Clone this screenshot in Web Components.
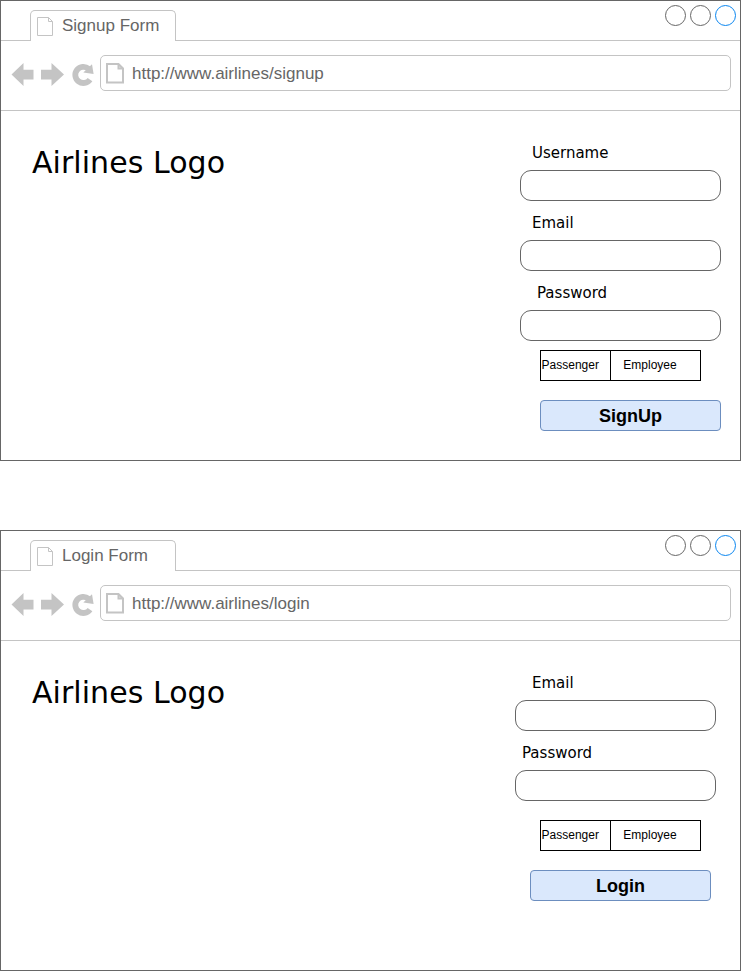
<!DOCTYPE html>
<html lang="en">
<head>
<meta charset="utf-8">
<title>Airlines forms</title>
<style>
html,body{margin:0;background:#fff}
body{width:741px;height:971px;overflow:hidden;display:flex;flex-direction:column;justify-content:space-between;font-family:"Liberation Sans",Arial,sans-serif;color:#000}
</style>
</head>
<body>
<browser-window heading="Signup Form" url="http://www.airlines/signup" style="height:461px">
  <site-logo>Airlines Logo</site-logo>
  <account-form slot="form">
    <form-field style="--indent:12px">Username</form-field>
    <form-field style="--indent:12px">Email</form-field>
    <form-field style="--indent:17px">Password</form-field>
    <role-picker style="margin:9px 0 0 20px"></role-picker>
    <submit-button style="margin:19px 0 0 20px">SignUp</submit-button>
  </account-form>
</browser-window>
<browser-window heading="Login Form" url="http://www.airlines/login" style="height:441px;--form-right:24px">
  <site-logo>Airlines Logo</site-logo>
  <account-form slot="form">
    <form-field style="--indent:17px">Email</form-field>
    <form-field style="--indent:7px">Password</form-field>
    <role-picker style="margin:19px 0 0 25px"></role-picker>
    <submit-button style="margin:19px 0 0 15px">Login</submit-button>
  </account-form>
</browser-window>
<script>
function define(name, html, setup) {
  const template = document.createElement('template');
  template.innerHTML = html;
  customElements.define(name, class extends HTMLElement {
    constructor() {
      super();
      this.attachShadow({mode: 'open'}).append(template.content.cloneNode(true));
    }
    connectedCallback() { if (setup) setup(this); }
  });
}

define('page-icon', `<style>
:host{display:block;flex:none}svg{display:block}
</style><svg fill="none" stroke="#c4c4c4"><path/></svg>`, el => {
  const svg = el.shadowRoot.querySelector('svg');
  const large = el.hasAttribute('large');
  svg.setAttribute('width', large ? 19 : 17);
  svg.setAttribute('height', large ? 22 : 20);
  svg.setAttribute('stroke-width', large ? 2 : 1);
  svg.querySelector('path').setAttribute('d', large
    ? 'M1 1H12.5L17 5.5V19.5H1ZM12.5 1V5.5H17'
    : 'M.5 .5H11.5L15.5 4.5V18.5H.5ZM11.5 .5V4.5H15.5');
});

define('nav-icons', `<style>
:host{display:block;flex:none}svg{display:block}
</style><svg width="84" height="26" fill="#c4c4c4">
<path d="M.5 12.5 12.5 1V7.8H22.5V17.5H12.5V24Z"/>
<path d="M53 12.5 40.5 1V7.8H30V17.5H40.5V24Z"/>
<path d="M79 17.6A8.1 8.1 0 1 1 77.6 6.7" fill="none" stroke="#c4c4c4" stroke-width="5.8"/>
<path d="M81 2.2 82.6 12 72.3 10.6Z"/>
</svg>`);

define('window-controls', `<style>
:host{display:flex;gap:4px}
i{box-sizing:border-box;width:21px;height:21px;border:1px solid #666;border-radius:50%}
i:last-child{border-color:#0a86f0}
</style><i></i><i></i><i></i>`);

define('browser-window', `<style>
:host{display:flex;flex-direction:column;box-sizing:border-box;width:741px;border:1px solid #666;color:#666;font-size:17px}
.strip{display:flex;height:40px;flex:none}
.lead,.rest{box-sizing:border-box;border-bottom:1px solid #c4c4c4}
.lead{width:29px}
.rest{flex:1;display:flex;justify-content:flex-end;padding:4px 4px 0 0}
.tab{box-sizing:border-box;width:146px;height:31px;margin-top:9px;border:1px solid #c4c4c4;border-bottom:0;border-radius:5px 5px 0 0;display:flex;padding:6px 0 0 6px}
.tab span{margin:-1px 0 0 8px;line-height:20px;white-space:nowrap}
.bar{box-sizing:border-box;display:flex;height:70px;flex:none;border-bottom:1px solid #c4c4c4;padding:14px 9px 0 10px}
nav-icons{margin-top:7px}
.address{box-sizing:border-box;flex:1;margin-left:5px;height:36px;border:1px solid #c4c4c4;border-radius:5px;display:flex;padding:7px 0 0 5px}
.address span{margin-left:7px;line-height:21px;white-space:nowrap}
.content{display:flex;justify-content:space-between;padding:31px var(--form-right,19px) 0 31px;color:#000}
</style>
<div class="strip"><div class="lead"></div><div class="tab"><page-icon></page-icon><span id="title"></span></div><div class="rest"><window-controls></window-controls></div></div>
<div class="bar"><nav-icons></nav-icons><div class="address"><page-icon large></page-icon><span id="url"></span></div></div>
<div class="content"><slot></slot><slot name="form"></slot></div>`, el => {
  el.shadowRoot.getElementById('title').textContent = el.getAttribute('heading');
  el.shadowRoot.getElementById('url').textContent = el.getAttribute('url');
});

define('site-logo', `<style>
:host{display:block;font:30px/42px "DejaVu Sans",Verdana,sans-serif;letter-spacing:.05px;white-space:nowrap}
</style><slot></slot>`);

define('account-form', `<style>:host{display:block;width:201px}</style><slot></slot>`);

define('form-field', `<style>
:host{display:block;height:70px;font:15px/22px "DejaVu Sans",Verdana,sans-serif}
:host(:last-of-type){height:59px}
.label{padding-left:var(--indent);height:28px;white-space:nowrap}
.input{box-sizing:border-box;height:31px;border:1px solid #666;border-radius:11px}
</style><div class="label"><slot></slot></div><div class="input"></div>`);

define('role-picker', `<style>
:host{display:flex;box-sizing:border-box;width:161px;height:31px;border:1px solid #000;font-size:12px;line-height:29px}
.first{box-sizing:border-box;width:70px;padding-left:.6px;border-right:1px solid #000}
.second{padding-left:12.3px}
</style><div class="first">Passenger</div><div class="second">Employee</div>`);

define('submit-button', `<style>
:host{display:block;box-sizing:border-box;width:181px;height:31px;border:1px solid #6c8ebf;border-radius:4px;background:#dae8fc;font-weight:bold;font-size:18px;line-height:30px;text-align:center}
</style><slot></slot>`);
</script>
</body>
</html>
